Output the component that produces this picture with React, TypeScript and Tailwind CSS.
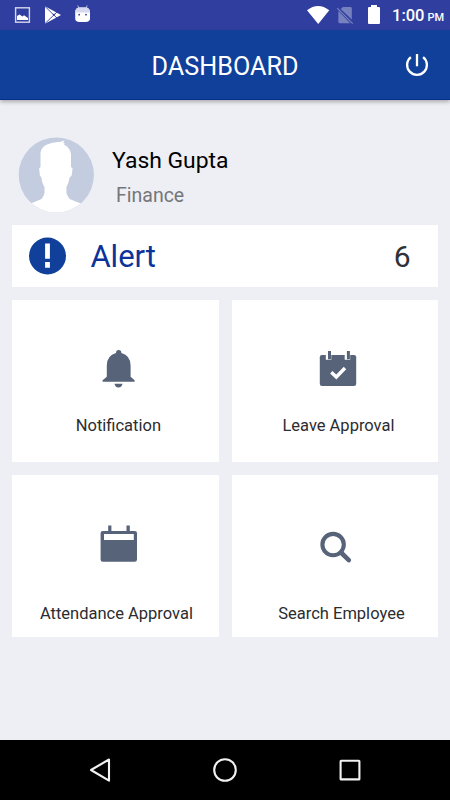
import type { ReactNode } from "react";
import { clsx } from "clsx";

function StatusBar() {
  return (
    <div className="flex h-[30px] items-start bg-[#303f9f] text-white">
      <svg className="ml-[14px] h-[30px] w-[18px] shrink-0" viewBox="14 0 18 30" fill="none">
        <rect x="15.6" y="7.8" width="13.8" height="14.4" stroke="#d5d8ee" strokeWidth="1.4" />
        <path d="M17 20v-4l2.500-1.500 3 2 1.500-1.200 4 2.700v2z" fill="#fff" />
      </svg>
      <svg className="ml-[12px] h-[30px] w-[20px] shrink-0" viewBox="44 0 20 30" fill="none">
        <path d="M45 6.3 61 15 45 23.7z" fill="#fff" />
        <path d="M45 6.5 57 18M45 23.5 57 12" stroke="#303f9f" strokeWidth="0.9" />
        <path d="m52.5 14.8 1.5-1.2 1.5 1.2-1.5 1.2z" fill="#303f9f" />
      </svg>
      <svg className="ml-[10px] h-[30px] w-[18px] shrink-0" viewBox="74 0 18 30" fill="none">
        <path d="m77.8 5.5 1.4 3M87.2 5.5l-1.4 3" stroke="#b9bfe2" strokeWidth="1" />
        <path d="M75.200 12.4Q75.2 7.5 80 7.5h5q5 0 5 4.9v6.200q0 3.400-4.500 3.400h-6q-4.300 0-4.300-3.400z" fill="#fff" />
        <path d="M75.200 12.4Q75.2 7.5 80 7.5h5q5 0 5 4.9z" fill="#d5d8ee" />
        <circle cx="79.2" cy="14.7" r="0.9" fill="#303f9f" />
        <circle cx="86" cy="14.7" r="0.9" fill="#303f9f" />
      </svg>
      <svg className="ml-auto h-[30px] w-[76px] shrink-0" viewBox="306 0 76 30" fill="none">
        <path d="M307 10.3Q318 1.7 329.3 10.3L318.2 24z" fill="#fff" />
        <g fill="#7781bf">
          <path d="M343 7h7.500q1.300 0 1.300 1.300V19.600L340.700 9z" />
          <path d="M338.400 11v11q0 1.300 1.300 1.300h10.500z" />
          <path d="m337.200 8.200 15.500 15.500" stroke="#7781bf" strokeWidth="1.200" />
        </g>
        <path d="M371 7V5h6v2h1.900q1.100 0 1.100 1.100v14.800q0 1.100-1.100 1.100h-9.800q-1.100 0-1.100-1.100V8.100Q368 7 369.100 7z" fill="#fff" />
      </svg>
      <div className="mr-[9px] ml-[10px] flex w-[49px] items-baseline gap-[3px] whitespace-nowrap leading-[31px] font-medium">
        <span className="text-[16.5px]">1:00</span>
        <span className="text-[11px]">PM</span>
      </div>
    </div>
  );
}

function AppBar() {
  return (
    <header className="relative z-10 flex h-[70px] items-center border-b border-[#062e88] bg-[#10409a] pr-5 pl-[46px] text-white shadow-[0_2px_4px_rgba(0,0,0,0.28)]">
      <h1 className="flex-1 pt-[5px] text-center text-[25.2px] leading-8">DASHBOARD</h1>
      <svg className="h-[26px] w-[26px]" viewBox="404 52 26 26" fill="none" stroke="#fff" strokeWidth="2.3">
        <path d="M417 54v12.3" />
        <path d="M410.9 57.1a9.9 9.9 0 1 0 12.2 0" />
      </svg>
    </header>
  );
}

function Profile() {
  return (
    <section className="flex h-[125px] items-start pt-[37px] pl-[18px]">
      <svg className="h-[77px] w-[77px]" viewBox="18 137 77 77">
        <defs>
          <clipPath id="avatar">
            <circle cx="56.3" cy="175" r="37.6" />
          </clipPath>
        </defs>
        <circle cx="56.3" cy="175" r="37.6" fill="#c4cce0" />
        <g clipPath="url(#avatar)">
          <path
            d="M40.500 167V153q.5-6 6.500-8.500 6-2.700 11.500-2.500 2.500-.2 4-1l2.200-.6-1.700 2.200 1.700.6-.8 1.200q6.300 3 7.100 9.600V167l1.600 1.500-1 7-2 2q-.8 6-3.200 9.500v6q1.200 3.500 3.200 6 4.500 2 12.500 5V215H29v-11q7-2.500 12.500-5 2.200-2.500 3-6v-6q-2.400-3-3.100-9.500l-1.500-2-.8-7z"
            fill="#fff"
          />
        </g>
      </svg>
      <div className="flex flex-col pl-[17px]">
        <span className="pt-[10px] text-[22.9px] leading-[28px] text-black">Yash Gupta</span>
        <span className="pt-[7px] pl-[4px] text-[19.5px] leading-[27px] text-[#757679]">Finance</span>
      </div>
    </section>
  );
}

function AlertRow({ count }: { count: number }) {
  return (
    <section className="flex h-[62px] items-center bg-white pr-[27px] pl-[17px]">
      <svg className="h-[38px] w-[38px]" viewBox="0.5 0 38 38">
        <circle cx="19" cy="19" r="18.5" fill="#10409a" />
        <path d="M16.600 6.500h4.800v15.300h-4.800zM16.600 25h4.800v5.700h-4.800z" fill="#fff" />
      </svg>
      <span className="pt-[2px] pl-[23px] text-[31px] leading-9 text-[#0c339a]">Alert</span>
      <span className="ml-auto pt-[2px] text-[30px] leading-9 text-[#303236]">{count}</span>
    </section>
  );
}

function Tile({ label, icon, className }: { label: string; icon: ReactNode; className?: string }) {
  return (
    <button
      type="button"
      className={clsx("flex h-[162px] flex-col items-center bg-white text-[#2b2c30]", className)}
    >
      {icon}
      <span className="text-[16.5px] leading-5 whitespace-nowrap">{label}</span>
    </button>
  );
}

const bellIcon = (
  <svg className="h-[44px] w-[44px]" viewBox="96 347 44 44" fill="#566378">
    <path d="M116 353q0-3 2.700-3t2.700 3q9.200 2.500 9.200 12.500v11.300l4 3.500v1.500h-32v-1.500l4.200-3.500v-11.300q0-10 9.200-12.500z" />
    <path d="M114.500 383.800h8q-.6 3.700-4 3.700t-4-3.700z" />
  </svg>
);

const calendarCheckIcon = (
  <svg className="h-[44px] w-[44px]" viewBox="316 347 44 44" fill="#566378">
    <path d="M322 355h32q2.200 0 2.200 2.200v26.600q0 2.200-2.200 2.200h-32q-2.200 0-2.200-2.200v-26.600q0-2.200 2.200-2.200z" />
    <path d="M325.800 354h5.500v5.700h-5.500zM344.700 354h5.500v5.700h-5.500z" fill="#fff" />
    <path d="M328 351h3v8.200h-3zM346.900 351h3v8.200h-3z" />
    <path d="m331.300 372.300 5 4.700 8.700-9" fill="none" stroke="#fff" strokeWidth="3.4" />
  </svg>
);

const calendarIcon = (
  <svg className="h-[44px] w-[44px]" viewBox="97 522 44 44" fill="#566378">
    <path d="M102.800 531h32q2.200 0 2.200 2.200v26.400q0 2.200-2.200 2.200h-32q-2.200 0-2.200-2.200v-26.400q0-2.200 2.200-2.200z" />
    <path d="M108.200 525.600h3.200v6h-3.200zM126.500 525.600h3.300v6h-3.300z" />
    <path d="M104 534h29.800v6H104z" fill="#fff" />
  </svg>
);

const searchIcon = (
  <svg className="h-[44px] w-[44px]" viewBox="314 525 44 44" fill="none" stroke="#566378">
    <circle cx="333.1" cy="544.6" r="10.7" strokeWidth="4.1" />
    <path d="m341 552.500 7.800 7.600" strokeWidth="4.6" strokeLinecap="round" />
  </svg>
);

function NavBar() {
  return (
    <nav className="flex h-[60px] items-center bg-black">
      <svg className="h-[60px] w-full" viewBox="0 0 450 60" fill="none" stroke="#f1f1f1" strokeWidth="2.1">
        <path d="M109 19.500v21.200L91 30z" strokeLinejoin="round" />
        <circle cx="225" cy="30" r="10.8" />
        <rect x="340.6" y="20.7" width="18.8" height="18.7" rx="0.5" />
      </svg>
    </nav>
  );
}

export default function App() {
  return (
    <div className="flex h-[800px] w-[450px] flex-col overflow-hidden bg-[#eeeff4] font-['Roboto',sans-serif]">
      <StatusBar />
      <AppBar />
      <Profile />
      <main className="flex flex-1 flex-col gap-[13px] pr-[12.5px] pl-[12.4px]">
        <AlertRow count={6} />
        <div className="grid grid-cols-[207px_1fr] gap-x-[13px] gap-y-[13px]">
          <Tile label="Notification" icon={bellIcon} className="gap-[25px] pt-[47px] pl-[5px]" />
          <Tile label="Leave Approval" icon={calendarCheckIcon} className="gap-[25px] pt-[47px] pl-[7px]" />
          <Tile
            label="Attendance Approval"
            icon={<span className="pl-[6px]">{calendarIcon}</span>}
            className="gap-[38px] pt-[47px] pl-[1px]"
          />
          <Tile
            label="Search Employee"
            icon={<span className="pr-[10px]">{searchIcon}</span>}
            className="gap-[35px] pt-[50px] pl-[13px]"
          />
        </div>
      </main>
      <NavBar />
    </div>
  );
}
